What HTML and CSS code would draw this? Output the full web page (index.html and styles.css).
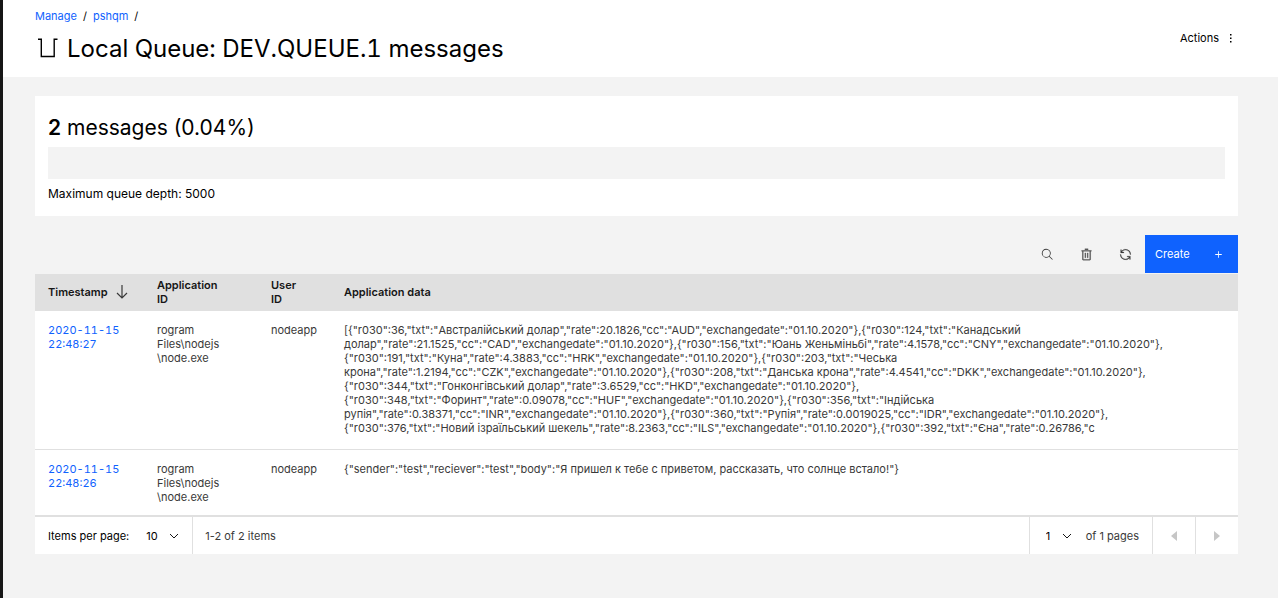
FILE: index.html
```html
<!DOCTYPE html>
<html lang="en">
<head>
<meta charset="utf-8">
<title>Local Queue: DEV.QUEUE.1 messages</title>
<link rel="stylesheet" href="styles.css">
</head>
<body>
<header class="page-header">
  <div class="heading">
    <nav class="breadcrumb" aria-label="Breadcrumb">
      <a href="#">Manage</a><span>/</span><a href="#">pshqm</a><span>/</span>
    </nav>
    <h1 class="title">
      <svg class="queue-icon" width="20" height="22" viewBox="0 0 20 22" fill="none" stroke="#000" aria-hidden="true"><path d="M0 1.200H3.300V18.500H16.200V1.200H19.500" stroke-width="1.400"/></svg>
      <span>Local Queue: DEV.QUEUE.1 messages</span>
    </h1>
  </div>
  <button class="actions" type="button">Actions
    <svg width="4" height="10" viewBox="0 0 4 10" aria-hidden="true"><path d="M1 1h1.500v1.500H1zM1 4.500h1.500V6H1zM1 8h1.500v1.500H1z"/></svg>
  </button>
</header>
<main class="content">
  <section class="depth">
    <h2 class="depth-title"><strong>2</strong> messages (0.04%)</h2>
    <div class="depth-bar" role="progressbar" aria-label="Queue depth" aria-valuemin="0" aria-valuemax="5000" aria-valuenow="2"></div>
    <p class="depth-note">Maximum queue depth: 5000</p>
  </section>
  <div class="toolbar">
    <button class="tool" type="button" aria-label="Search"><svg width="13" height="13" viewBox="0 0 32 32"><path d="M29 27.6 21.4 20A11 11 0 1 0 20 21.4l7.600 7.600zM4 13a9 9 0 1 1 9 9 9 9 0 0 1-9-9z"/></svg></button>
    <button class="tool" type="button" aria-label="Delete"><svg width="13" height="13" viewBox="0 0 32 32" stroke="#393939" stroke-width="0.600"><path d="M12 12h2v12h-2zM18 12h2v12h-2z"/><path d="M4 6v2h2v20a2 2 0 0 0 2 2h16a2 2 0 0 0 2-2V8h2V6zm4 22V8h16v20zM12 2h8v2h-8z"/></svg></button>
    <button class="tool" type="button" aria-label="Refresh"><svg width="13" height="13" viewBox="0 0 32 32" stroke="#393939" stroke-width="0.600"><path d="M12 10H6.780A11 11 0 0 1 27 16h2A13 13 0 0 0 6 7.680V4H4v8h8zM20 22h5.220A11 11 0 0 1 5 16H3a13 13 0 0 0 23 8.320V28h2v-8h-8z"/></svg></button>
    <button class="create" type="button">Create
      <svg width="13" height="13" viewBox="0 0 32 32" fill="#fff" aria-hidden="true"><path d="M17 15V8h-2v7H8v2h7v7h2v-7h7v-2z"/></svg>
    </button>
  </div>
  <table class="messages">
    <colgroup><col class="col-time"><col class="col-app"><col class="col-user"><col></colgroup>
    <thead>
      <tr>
        <th scope="col"><button class="sort" type="button">Timestamp <svg width="12" height="14" viewBox="0 0 12 14" fill="none" stroke="#393939" stroke-width="1.2" aria-hidden="true"><path d="M6 0v13M1 8l5 5 5-5"/></svg></button></th>
        <th scope="col">Application<br>ID</th>
        <th scope="col">User<br>ID</th>
        <th scope="col">Application data</th>
      </tr>
    </thead>
    <tbody>
      <tr>
        <td class="time"><a href="#">2020-11-15<br>22:48:27</a></td>
        <td>rogram<br>Files\nodejs<br>\node.exe</td>
        <td>nodeapp</td>
        <td class="data">[{"r030":36,"txt":"Австралійський долар","rate":20.1826,"cc":"AUD","exchangedate":"01.10.2020"},{"r030":124,"txt":"Канадський<br>долар","rate":21.1525,"cc":"CAD","exchangedate":"01.10.2020"},{"r030":156,"txt":"Юань Женьміньбі","rate":4.1578,"cc":"CNY","exchangedate":"01.10.2020"},<br>{"r030":191,"txt":"Куна","rate":4.3883,"cc":"HRK","exchangedate":"01.10.2020"},{"r030":203,"txt":"Чеська<br>крона","rate":1.2194,"cc":"CZK","exchangedate":"01.10.2020"},{"r030":208,"txt":"Данська крона","rate":4.4541,"cc":"DKK","exchangedate":"01.10.2020"},<br>{"r030":344,"txt":"Гонконгівський долар","rate":3.6529,"cc":"HKD","exchangedate":"01.10.2020"},<br>{"r030":348,"txt":"Форинт","rate":0.09078,"cc":"HUF","exchangedate":"01.10.2020"},{"r030":356,"txt":"Індійська<br>рупія","rate":0.38371,"cc":"INR","exchangedate":"01.10.2020"},{"r030":360,"txt":"Рупія","rate":0.0019025,"cc":"IDR","exchangedate":"01.10.2020"},<br>{"r030":376,"txt":"Новий ізраїльський шекель","rate":8.2363,"cc":"ILS","exchangedate":"01.10.2020"},{"r030":392,"txt":"Єна","rate":0.26786,"c</td>
      </tr>
      <tr>
        <td class="time"><a href="#">2020-11-15<br>22:48:26</a></td>
        <td>rogram<br>Files\nodejs<br>\node.exe</td>
        <td>nodeapp</td>
        <td class="data">{"sender":"test","reciever":"test","body":"Я пришел к тебе с приветом, рассказать, что солнце встало!"}</td>
      </tr>
    </tbody>
  </table>
  <div class="pagination">
    <div class="per-page">
      <label for="page-size">Items per page:</label>
      <span class="select size-select"><select id="page-size"><option>10</option></select><svg width="10" height="6" viewBox="0 0 10 6" fill="none" stroke="#161616" aria-hidden="true"><path d="M1 1l4 4 4-4"/></svg></span>
    </div>
    <span class="range">1-2 of 2 items</span>
    <div class="pages">
      <span class="select page-select"><select id="page-number" aria-label="Page number"><option>1</option></select><svg width="10" height="6" viewBox="0 0 10 6" fill="none" stroke="#161616" aria-hidden="true"><path d="M1 1l4 4 4-4"/></svg></span>
      <label for="page-number">of 1 pages</label>
    </div>
    <button class="step" type="button" aria-label="Previous page" disabled><svg width="6" height="10" viewBox="0 0 6 10"><path d="M6 0v10L0 5z"/></svg></button>
    <button class="step" type="button" aria-label="Next page" disabled><svg width="6" height="10" viewBox="0 0 6 10"><path d="M0 0v10l6-5z"/></svg></button>
  </div>
</main>
</body>
</html>
```
FILE: styles.css
```css
* { box-sizing: border-box; }
body {
  margin: 0;
  min-height: 100vh;
  border-left: 3px solid #161616;
  background: #f3f3f3;
  color: #000;
  font: 11px/14px Inter, "Noto Sans", sans-serif;
}
button, select {
  margin: 0;
  padding: 0;
  border: 0;
  border-radius: 0;
  background: transparent;
  color: inherit;
  font: inherit;
}
svg { display: block; flex: none; }
a { color: #0f62fe; text-decoration: none; }

.page-header {
  display: flex;
  justify-content: space-between;
  align-items: center;
  padding: 9px 45px 11px 32px;
  background: #fff;
}
.breadcrumb { display: flex; gap: 6px; }
.title {
  display: flex;
  align-items: center;
  gap: 9px;
  margin: 9px 0 0;
  padding-left: 3px;
  font-size: 24px;
  line-height: 34px;
  font-weight: 400;
  font-variant-numeric: tabular-nums;
}
.actions { display: flex; align-items: center; gap: 10px; }

.content { padding: 19px 40px 44px 32px; }
.depth { padding: 18px 13px 14px; background: #fff; }
.depth-title { margin: 0 0 6px; font-size: 21px; line-height: 27px; font-weight: 400; }
.depth-title strong { font-weight: 600; }
.depth-bar { height: 32px; background: #f3f3f3; }
.depth-note { margin: 7px 0 0; font-size: 12px; line-height: 16px; }

.toolbar {
  display: flex;
  justify-content: flex-end;
  height: 38px;
  margin: 19px 0 1px;
}
.tool { display: grid; place-items: center; width: 39px; fill: #393939; }
.create {
  display: flex;
  align-items: center;
  justify-content: space-between;
  width: 93px;
  padding: 0 13px 0 10px;
  background: #0f62fe;
  color: #fff;
}

.messages { width: 100%; table-layout: fixed; border-collapse: separate; border-spacing: 0; background: #fff; }
.col-time { width: 109px; }
.col-app { width: 114px; }
.col-user { width: 73px; }
th {
  height: 37px;
  padding: 0 0 1px 13px;
  background: #e0e0e0;
  color: #161616;
  font-weight: 600;
  text-align: left;
  vertical-align: middle;
}
.sort { display: flex; align-items: center; gap: 8px; }
td {
  padding: 12px 0 11px 13px;
  border-bottom: 1px solid #e0e0e0;
  color: #393939;
  vertical-align: top;
}
.time { font-variant-numeric: tabular-nums; }
.data { padding-bottom: 14px; white-space: nowrap; }

.pagination {
  display: flex;
  align-items: stretch;
  height: 38px;
  border-top: 1px solid #e0e0e0;
  background: #fff;
}
.per-page, .pages, .range, .step { display: flex; align-items: center; }
.per-page { gap: 17px; padding: 0 13px; border-right: 1px solid #e0e0e0; }
.range { flex: 1; padding-left: 12px; color: #393939; }
.pages { gap: 14px; padding: 0 13px 0 16px; border-left: 1px solid #e0e0e0; }
.pages label { color: #393939; }
.select { display: grid; align-items: center; }
.select select, .select svg { grid-area: 1 / 1; }
.select svg { justify-self: end; pointer-events: none; }
.select select { appearance: none; width: 100%; }
.size-select { width: 33px; }
.page-select { width: 26px; }
.step { justify-content: center; width: 43px; border-left: 1px solid #e0e0e0; fill: #c6c6c6; }
```
